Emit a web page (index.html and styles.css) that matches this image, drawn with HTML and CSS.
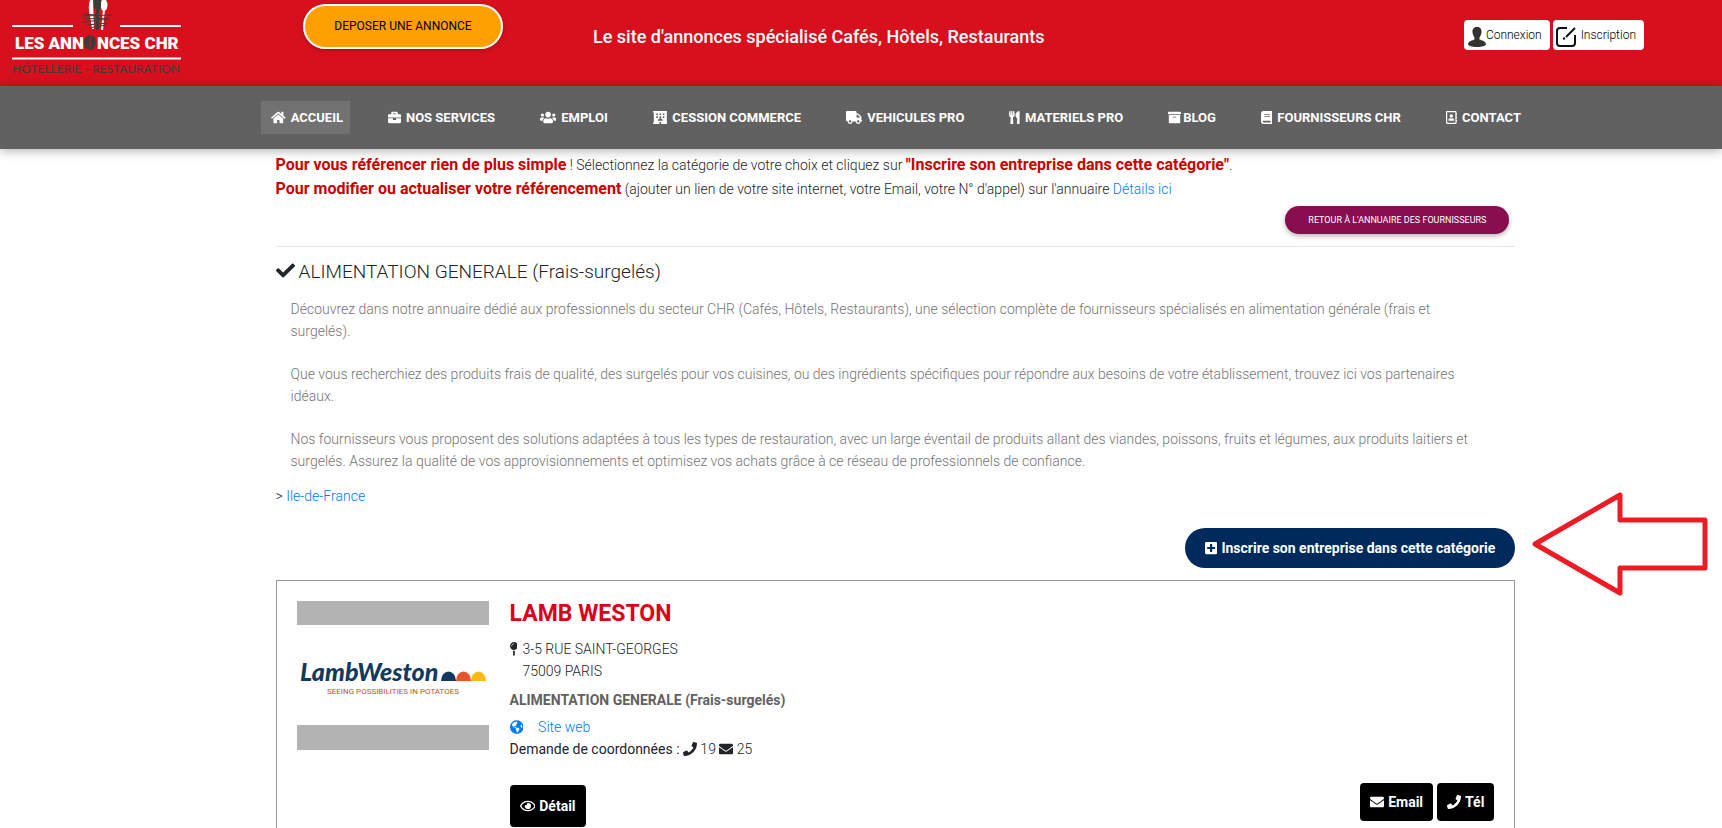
FILE: index.html
```html
<!DOCTYPE html>
<html lang="fr">
<head>
  <meta charset="UTF-8" />
  <meta name="viewport" content="width=device-width, initial-scale=1.0"/>
  <title>Les Annonces CHR - Annuaire des fournisseurs</title>
  <link rel="stylesheet" href="styles.css">
</head>
<body>
  <!-- Icon paths -->
  <svg class="sprite" aria-hidden="true">
    <defs>
      <path id="i-phone" d="M493.4 24.6l-104-24c-11.3-2.6-22.9 3.3-27.5 13.9l-48 112c-4.2 9.8-1.4 21.3 6.9 28l60.6 49.6c-36 76.7-98.9 140.5-177.2 177.2l-49.6-60.6c-6.8-8.3-18.2-11.1-28-6.9l-112 48C3.9 366.5-2 378.1.6 389.4l24 104C27.1 504.2 36.7 512 48 512c256.1 0 464-207.5 464-464 0-11.2-7.7-20.9-18.6-23.4z"/>
      <path id="i-mail" d="M502.3 190.8c3.9-3.1 9.7-.2 9.7 4.7V400c0 26.5-21.5 48-48 48H48c-26.5 0-48-21.5-48-48V195.6c0-5 5.7-7.8 9.7-4.7 22.4 17.4 52.1 39.5 154.1 113.6 21.1 15.4 56.7 47.8 92.2 47.6 35.7.3 72-32.8 92.3-47.6 102-74.1 131.6-96.3 154-113.7zM256 320c23.2.4 56.6-29.2 73.4-41.4 132.7-96.3 142.8-104.7 173.4-128.7 5.8-4.5 9.2-11.5 9.2-18.9v-19c0-26.5-21.5-48-48-48H48c-26.5 0-48 21.5-48 48v19c0 7.4 3.4 14.3 9.2 18.9 30.6 23.9 40.7 32.4 173.4 128.7 16.8 12.2 50.2 41.8 73.4 41.4z"/>
    </defs>
  </svg>

  <header class="topbar">
    <a class="logo" href="#" aria-label="Les Annonces CHR">
      <svg width="172" height="76" viewBox="0 0 172 76">
        <g stroke="#fff" stroke-width="2">
          <path d="M0 26h61M108 26h61M0 58.500h169"/>
        </g>
        <path d="M78 0c-2 6-1 12 0 16l2 13h2L81 0z" fill="#fff"/>
        <ellipse cx="92" cy="5" rx="3.500" ry="6" fill="#fff"/>
        <path d="M91 9h2l-2 21h-2z" fill="#fff"/>
        <path d="M82 0v6c0 2 1 3 2 4v20h3V10c1-1 2-2 2-4V0" fill="#3c3c3b"/>
        <path d="M70 16l30-1M72 19l24-1M71 22l26-3M75 25l20-2M77 28l17-3M72 14l12 1" stroke="#3c3c3b" stroke-width="1" fill="none"/>
        <text class="logo-name" x="72" y="49" text-anchor="end">LES ANN</text>
        <ellipse cx="78" cy="42.500" rx="6" ry="7.500" fill="#3c3c3b"/>
        <path d="M80 35c-5 5 1 8-4 15" stroke="#d8101e" stroke-width="1" fill="none"/>
        <text class="logo-name" x="85" y="49">NCES CHR</text>
        <text class="logo-sub" x="0" y="73">HÔTELLERIE - RESTAURATION</text>
      </svg>
    </a>
    <a class="post-ad" href="#">DEPOSER UNE ANNONCE</a>
    <p class="slogan">Le site d'annonces spécialisé Cafés, Hôtels, Restaurants</p>
    <div class="account">
      <a class="account-link" href="#">
        <svg width="18" height="20" viewBox="0 0 18 20" fill="#333"><path d="M9 0c3 0 5 2 4.500 5.500-.3 2.500-1.500 4-2 5v2c2 1 6 1.500 6.500 4.500 0 2-4 3-9 3s-9-1-9-3c.5-3 4.500-3.500 6.500-4.500v-2c-.5-1-1.700-2.500-2-5C4 2 6 0 9 0z"/></svg>
        Connexion
      </a>
      <a class="account-link signup" href="#">
        <svg width="20" height="20" viewBox="0 0 20 20" fill="none" stroke="#111" stroke-width="2"><path d="M11 1H4a3 3 0 0 0-3 3v12a3 3 0 0 0 3 3h12a3 3 0 0 0 3-3V8M19 1l-9 9M9 11l-2 1"/></svg>
        Inscription
      </a>
    </div>
  </header>

  <nav class="menu">
    <a class="active" href="#"><svg class="icon" viewBox="0 0 576 512"><path d="M280.37 148.26L96 300.11V464a16 16 0 0 0 16 16l112.06-.29a16 16 0 0 0 15.92-16V368a16 16 0 0 1 16-16h64a16 16 0 0 1 16 16v95.64a16 16 0 0 0 16 16.05L464 480a16 16 0 0 0 16-16V300L295.67 148.26a12.19 12.19 0 0 0-15.3 0zM571.6 251.47L488 182.56V44.05a12 12 0 0 0-12-12h-56a12 12 0 0 0-12 12v72.61L318.47 43a48 48 0 0 0-61 0L4.34 251.47a12 12 0 0 0-1.6 16.9l25.5 31A12 12 0 0 0 45.15 301l235.22-193.74a12.19 12.19 0 0 1 15.3 0L530.9 301a12 12 0 0 0 16.9-1.6l25.5-31a12 12 0 0 0-1.7-16.93z"/></svg>ACCUEIL</a>
    <a href="#"><svg class="icon" viewBox="0 0 512 512"><path d="M320 336c0 8.84-7.16 16-16 16h-96c-8.84 0-16-7.16-16-16v-48H0v144c0 25.6 22.4 48 48 48h416c25.6 0 48-22.4 48-48V288H320v48zm144-208h-80V80c0-25.6-22.4-48-48-48H176c-25.6 0-48 22.4-48 48v48H48c-25.6 0-48 22.4-48 48v80h512v-80c0-25.6-22.4-48-48-48zm-144 0H192V96h128v32z"/></svg>NOS SERVICES</a>
    <a href="#"><svg class="icon" viewBox="0 0 640 512"><path d="M96 224c35.3 0 64-28.7 64-64s-28.7-64-64-64-64 28.7-64 64 28.7 64 64 64zm448 0c35.3 0 64-28.7 64-64s-28.7-64-64-64-64 28.7-64 64 28.7 64 64 64zm32 32h-64c-17.6 0-33.5 7.1-45.1 18.6 40.3 22.1 68.9 62 75.1 109.4h66c17.7 0 32-14.3 32-32v-32c0-35.3-28.7-64-64-64zm-256 0c61.9 0 112-50.1 112-112S381.9 32 320 32 208 82.1 208 144s50.1 112 112 112zm76.8 32h-8.3c-20.8 10-43.9 16-68.5 16s-47.6-6-68.5-16h-8.3C179.6 288 128 339.6 128 403.2V432c0 26.5 21.5 48 48 48h288c26.5 0 48-21.5 48-48v-28.8c0-63.6-51.6-115.2-115.2-115.2zm-223.7-13.4C161.5 263.1 145.6 256 128 256H64c-35.3 0-64 28.7-64 64v32c0 17.7 14.3 32 32 32h65.9c6.3-47.4 34.9-87.3 75.2-109.4z"/></svg>EMPLOI</a>
    <a href="#"><svg class="icon" viewBox="0 0 576 512"><path fill-rule="evenodd" d="M16 0h544c9 0 16 7 16 16v32c0 9-7 16-16 16h-16v384h16c9 0 16 7 16 16v32c0 9-7 16-16 16H320v-80h-64v80H16c-9 0-16-7-16-16v-32c0-9 7-16 16-16h16V64H16C7 64 0 57 0 48V16C0 7 7 0 16 0zM128 96v64h64V96zM256 96v64h64V96zM384 96v64h64V96zM128 208v64h64v-64zM256 208v64h64v-64zM384 208v64h64v-64zM192 384h192c0-53-43-96-96-96s-96 43-96 96z"/></svg>CESSION COMMERCE</a>
    <a href="#"><svg class="icon" viewBox="0 0 640 512"><path d="M624 352h-16V243.900c0-12.700-5.100-24.900-14.100-33.900L494 110.100c-9-9-21.200-14.100-33.900-14.100H416V48c0-26.500-21.500-48-48-48H48C21.500 0 0 21.500 0 48v320c0 26.500 21.500 48 48 48h16c0 53 43 96 96 96s96-43 96-96h128c0 53 43 96 96 96s96-43 96-96h48c8.800 0 16-7.200 16-16v-32c0-8.800-7.200-16-16-16zM160 464c-26.500 0-48-21.500-48-48s21.500-48 48-48 48 21.500 48 48-21.500 48-48 48zm320 0c-26.500 0-48-21.500-48-48s21.500-48 48-48 48 21.500 48 48-21.500 48-48 48zm80-208H416V144h44.100l99.900 99.900V256z"/></svg>VEHICULES PRO</a>
    <a href="#"><svg class="icon" viewBox="0 0 416 512"><path d="M207.900 15.200c.8 4.700 16.100 94.500 16.100 128.800 0 52.300-27.800 89.600-68.900 104.600L168 486.700c.7 13.700-10.200 25.300-24 25.300H80c-13.700 0-24.700-11.500-24-25.300l12.900-238.100C27.700 233.600 0 196.200 0 144 0 109.600 15.300 19.900 16.100 15.200 19.300-5.100 61.400-5.400 64 16.300v141.200c1.300 3.400 15.100 3.200 16 0 1.400-25.300 7.900-139.200 8-141.800 3.300-20.800 44.700-20.800 47.900 0 .2 2.700 6.600 116.500 8 141.800.9 3.200 14.800 3.400 16 0V16.300c2.600-21.600 44.800-21.400 47.900-1.100zm119.200 285.700l-15 185.100c-1.200 14 9.900 26 23.900 26h56c13.300 0 24-10.700 24-24V24c0-13.200-10.700-24-24-24-82.500 0-221.400 178.500-64.900 300.900z"/></svg>MATERIELS PRO</a>
    <a class="tight" href="#"><svg class="icon" viewBox="0 0 512 512"><path d="M32 448c0 17.700 14.300 32 32 32h384c17.700 0 32-14.300 32-32V160H32v288zm160-212c0-6.600 5.400-12 12-12h104c6.600 0 12 5.400 12 12v8c0 6.600-5.400 12-12 12H204c-6.600 0-12-5.400-12-12v-8zM480 32H32C14.300 32 0 46.300 0 64v48c0 8.800 7.200 16 16 16h480c8.800 0 16-7.200 16-16V64c0-17.700-14.300-32-32-32z"/></svg>BLOG</a>
    <a href="#"><svg class="icon" viewBox="0 0 448 512"><path d="M448 360V24c0-13.300-10.700-24-24-24H96C43 0 0 43 0 96v320c0 53 43 96 96 96h328c13.300 0 24-10.700 24-24v-16c0-7.500-3.500-14.300-8.900-18.700-4.200-15.400-4.200-59.300 0-74.700 5.400-4.300 8.900-11.100 8.900-18.600zM128 134c0-3.300 2.700-6 6-6h212c3.300 0 6 2.700 6 6v20c0 3.300-2.700 6-6 6H134c-3.300 0-6-2.700-6-6v-20zm0 64c0-3.300 2.700-6 6-6h212c3.300 0 6 2.700 6 6v20c0 3.300-2.700 6-6 6H134c-3.300 0-6-2.700-6-6v-20zm253.400 250H96c-17.700 0-32-14.300-32-32 0-17.600 14.400-32 32-32h285.400c-1.900 17.100-1.900 46.900 0 64z"/></svg>FOURNISSEURS CHR</a>
    <a href="#"><svg class="icon" viewBox="0 0 448 512"><path d="M436 160c6.600 0 12-5.400 12-12v-40c0-6.600-5.400-12-12-12h-20V48c0-26.500-21.500-48-48-48H48C21.500 0 0 21.500 0 48v416c0 26.500 21.500 48 48 48h320c26.500 0 48-21.500 48-48v-48h20c6.600 0 12-5.400 12-12v-40c0-6.600-5.400-12-12-12h-20v-64h20c6.600 0 12-5.400 12-12v-40c0-6.600-5.400-12-12-12h-20v-64h20zm-68 304H48V48h320v416zM208 256c35.300 0 64-28.700 64-64s-28.700-64-64-64-64 28.700-64 64 28.700 64 64 64zm-89.600 128h179.200c12.400 0 22.400-8.600 22.400-19.200v-19.200c0-31.800-30.100-57.600-67.200-57.600-10.800 0-18.700 8-44.800 8-26.900 0-33.400-8-44.800-8-37.100 0-67.200 25.800-67.200 57.600v19.200c0 10.600 10 19.200 22.400 19.200z"/></svg>CONTACT</a>
  </nav>

  <main>
    <p class="notice"><strong>Pour vous référencer rien de plus simple</strong> ! Sélectionnez la catégorie de votre choix et cliquez sur <strong>"Inscrire son entreprise dans cette catégorie"</strong>.<br>
    <strong>Pour modifier ou actualiser votre référencement</strong> (ajouter un lien de votre site internet, votre Email, votre N° d'appel) sur l'annuaire <a href="#">Détails ici</a></p>

    <div class="back-row">
      <a class="back-btn" href="#">RETOUR À L'ANNUAIRE DES FOURNISSEURS</a>
    </div>

    <h1><svg class="icon" viewBox="0 0 512 512"><path d="M173.898 439.404l-166.400-166.400c-9.997-9.997-9.997-26.206 0-36.204l36.203-36.204c9.997-9.998 26.207-9.998 36.204 0L192 312.690 432.095 72.596c9.997-9.997 26.207-9.997 36.204 0l36.203 36.204c9.997 9.997 9.997 26.206 0 36.204l-294.400 294.401c-9.998 9.997-26.207 9.997-36.204-.001z"/></svg>ALIMENTATION GENERALE (Frais-surgelés)</h1>

    <div class="intro">
      <p>Découvrez dans notre annuaire dédié aux professionnels du secteur CHR (Cafés, Hôtels, Restaurants), une sélection complète de fournisseurs spécialisés en alimentation générale (frais et surgelés).</p>
      <p>Que vous recherchiez des produits frais de qualité, des surgelés pour vos cuisines, ou des ingrédients spécifiques pour répondre aux besoins de votre établissement, trouvez ici vos partenaires idéaux.</p>
      <p>Nos fournisseurs vous proposent des solutions adaptées à tous les types de restauration, avec un large éventail de produits allant des viandes, poissons, fruits et légumes, aux produits laitiers et surgelés. Assurez la qualité de vos approvisionnements et optimisez vos achats grâce à ce réseau de professionnels de confiance.</p>
    </div>

    <p class="region">&gt; <a href="#">Ile-de-France</a></p>

    <div class="register-row">
      <a class="register-btn" href="#"><svg class="icon" viewBox="0 0 448 512"><path d="M400 32H48C21.500 32 0 53.500 0 80v352c0 26.500 21.500 48 48 48h352c26.500 0 48-21.500 48-48V80c0-26.500-21.500-48-48-48zm-32 252c0 6.600-5.400 12-12 12h-92v92c0 6.600-5.400 12-12 12h-56c-6.600 0-12-5.400-12-12v-92H92c-6.600 0-12-5.400-12-12v-56c0-6.600 5.400-12 12-12h92v-92c0-6.600 5.400-12 12-12h56c6.600 0 12 5.400 12 12v92h92c6.600 0 12 5.400 12 12v56z"/></svg>Inscrire son entreprise dans cette catégorie</a>
      <svg class="arrow" width="176" height="104" viewBox="0 0 176 104"><path d="M3 52L88 3v25h85v48H88v25z" fill="none" stroke="#ed1c24" stroke-width="5" stroke-linejoin="round"/></svg>
    </div>

    <!-- Supplier card -->
    <article class="supplier">
      <div class="picture">
        <svg width="192" height="149" viewBox="0 0 192 149" role="img" aria-label="Lamb Weston">
          <path d="M0 0h192v24H0zM0 124h192v25H0z" fill="#b3b3b3"/>
          <text class="brand" x="3" y="80">LambWeston</text>
          <path d="M144 80a7.500 9.500 0 0 1 15 0z" fill="#133a5e"/>
          <path d="M159 80a7.500 9.500 0 0 1 15 0z" fill="#e8542a"/>
          <path d="M174 80a7.500 9.500 0 0 1 15 0z" fill="#fdb913"/>
          <text class="tagline" x="96" y="93" text-anchor="middle">SEEING POSSIBILITIES IN POTATOES</text>
        </svg>
      </div>
      <div class="details">
        <h2>LAMB WESTON</h2>
        <div class="address">
          <svg class="icon" viewBox="0 0 288 512"><path d="M112 316.940v156.690l22.020 33.020c4.750 7.120 15.220 7.120 19.970 0L176 473.630V316.940c-10.390 1.920-21.060 3.060-32 3.060s-21.610-1.140-32-3.060zM144 0C64.470 0 0 64.470 0 144s64.470 144 144 144 144-64.470 144-144S223.530 0 144 0zm0 76c-37.500 0-68 30.500-68 68 0 6.620-5.380 12-12 12s-12-5.380-12-12c0-50.730 41.280-92 92-92 6.620 0 12 5.380 12 12s-5.380 12-12 12z"/></svg>
          <p>3-5 RUE SAINT-GEORGES<br>75009 PARIS</p>
        </div>
        <p class="category">ALIMENTATION GENERALE (Frais-surgelés)</p>
        <a class="website" href="#"><svg class="icon" viewBox="0 0 496 512"><path d="M248 8C111.030 8 0 119.030 0 256s111.030 248 248 248 248-111.030 248-248S384.970 8 248 8zm82.290 357.600c-3.900 3.880-7.990 7.950-11.310 11.280-2.990 3-5.100 6.700-6.170 10.710-1.510 5.660-2.730 11.380-4.770 16.870l-17.390 46.850c-13.760 3-28 4.690-42.650 4.690v-27.380c1.690-12.620-7.640-36.260-22.630-51.250-6-6-9.370-14.140-9.370-22.630v-32.010c0-11.640-6.270-22.340-16.460-27.970-14.370-7.950-34.810-19.060-48.810-26.110-11.480-5.780-22.100-13.140-31.650-21.750l-.8-.72a114.792 114.792 0 0 1-18.060-20.740c-9.380-13.770-24.660-36.420-34.590-51.140 20.470-45.500 57.360-82.040 103.200-101.890l24.010 12.010C203.480 89.740 216 82.010 216 70.110v-11.300c7.990-1.290 16.120-2.110 24.390-2.420l28.300 28.300c6.250 6.250 6.250 16.380 0 22.630L264 112l-10.340 10.340c-3.120 3.120-3.120 8.190 0 11.310l4.690 4.690c3.120 3.120 3.120 8.190 0 11.310l-8 8a8.008 8.008 0 0 1-5.660 2.340h-8.990c-2.080 0-4.080.81-5.580 2.270l-9.920 9.650a8.008 8.008 0 0 0-1.580 9.310l15.590 31.190c2.660 5.320-1.210 11.580-7.150 11.580h-5.640c-1.930 0-3.790-.7-5.240-1.960l-9.280-8.060a16.017 16.017 0 0 0-15.550-3.100l-31.170 10.390a11.950 11.950 0 0 0-8.170 11.340c0 4.530 2.560 8.660 6.610 10.690l11.080 5.540c9.410 4.710 19.790 7.160 30.310 7.160s22.590 27.290 32 32h66.750c8.490 0 16.620 3.370 22.630 9.370l13.690 13.690a30.503 30.503 0 0 1 8.930 21.570 46.536 46.536 0 0 1-13.720 32.980zM417 274.250c-5.790-1.450-10.840-5-14.150-9.970l-17.980-26.970a23.970 23.970 0 0 1 0-26.620l19.590-29.380c2.320-3.470 5.500-6.290 9.240-8.150l12.980-6.490C440.200 193.590 448 223.870 448 256c0 8.670-.74 17.160-1.820 25.540L417 274.250z"/></svg>Site web</a>
        <p class="requests"><span>Demande de coordonnées :</span> <svg class="icon" viewBox="0 0 512 512"><use href="#i-phone"/></svg> 19 <svg class="icon" viewBox="0 0 512 512"><use href="#i-mail"/></svg> 25</p>
        <div class="actions">
          <button class="btn detail" type="button"><svg class="icon" viewBox="0 0 576 512"><path d="M288 144a110.940 110.940 0 0 0-31.240 5 55.400 55.400 0 0 1 7.240 27 56 56 0 0 1-56 56 55.400 55.400 0 0 1-27-7.240A111.710 111.710 0 1 0 288 144zm284.520 97.400C518.290 135.590 410.930 64 288 64S57.680 135.640 3.480 241.410a32.350 32.350 0 0 0 0 29.190C57.710 376.410 165.070 448 288 448s230.320-71.640 284.520-177.410a32.350 32.350 0 0 0 0-29.190zM288 400c-98.650 0-189.090-55-237.930-144C98.910 167 189.340 112 288 112s189.090 55 237.930 144C477.100 345 386.660 400 288 400z"/></svg>Détail</button>
          <div class="contact">
            <button class="btn" type="button"><svg class="icon" viewBox="0 0 512 512"><use href="#i-mail"/></svg>Email</button>
            <button class="btn" type="button"><svg class="icon" viewBox="0 0 512 512"><use href="#i-phone"/></svg>Tél</button>
          </div>
        </div>
      </div>
    </article>
  </main>
</body>
</html>
```

FILE: styles.css
```css
* {
  box-sizing: border-box;
}

body {
  margin: 0;
  font-family: Roboto, "Liberation Sans", sans-serif;
  font-size: 14px;
  font-weight: 300;
  line-height: 22px;
  color: #212529;
  background: #fff;
}

p, h1, h2 {
  margin: 0;
}

a {
  color: #007bff;
  text-decoration: none;
}

.sprite {
  display: none;
}

.icon {
  height: 1em;
  fill: currentColor;
  vertical-align: -2px;
}

/* Header */
.topbar {
  display: flex;
  align-items: flex-start;
  height: 86px;
  padding: 0 78px 0 12px;
  background: #d8101e;
}

.logo svg {
  display: block;
  overflow: visible;
}

.logo-name {
  font-size: 17px;
  font-weight: 900;
  fill: #fff;
}

.logo-sub {
  font-family: Lato, sans-serif;
  font-size: 12px;
  font-weight: 400;
  fill: #3c3c3b;
}

.post-ad {
  width: 200px;
  margin: 4px 0 0 119px;
  padding: 10px 0 11px;
  border: 2px solid #fff;
  border-radius: 24px;
  background: #ffa000;
  color: #000;
  font-size: 12px;
  font-weight: 400;
  line-height: 20px;
  text-align: center;
  box-shadow: 0 2px 5px rgba(0, 0, 0, 0.2);
}

.slogan {
  margin: 25px 0 0 90px;
  color: #fff;
  font-size: 18px;
  font-weight: 500;
  line-height: 24px;
}

.account {
  display: flex;
  gap: 3px;
  margin: 20px 0 0 auto;
}

.account-link {
  display: flex;
  height: 30px;
  padding: 0 8px 0 4px;
  border-radius: 4px;
  background: #fff;
  color: #000;
  font-size: 12px;
  line-height: 30px;
}

.account-link svg {
  margin-top: 7px;
}

.signup {
  gap: 5px;
  padding-left: 3px;
}

/* Main menu */
.menu {
  display: flex;
  align-items: center;
  gap: 28px;
  height: 63px;
  padding-left: 261px;
  background: #616161;
  box-shadow: 0 2px 10px rgba(0, 0, 0, 0.3);
}

.menu a {
  display: flex;
  align-items: center;
  gap: 5px;
  padding: 0 7px 0 10px;
  color: #fff;
  font-size: 13px;
  font-weight: 700;
  line-height: 33px;
  white-space: nowrap;
}

.menu a.active {
  background: #727272;
}

.menu a.tight {
  gap: 2px;
}

/* Content */
main {
  margin: 0 12% 0 16%;
  padding-top: 4px;
}

.notice {
  font-size: 14px;
  line-height: 24px;
}

.notice strong {
  color: #c00;
  font-size: 16px;
  font-weight: 700;
}

.back-row {
  display: flex;
  justify-content: flex-end;
  padding: 5px 6px 12px;
  border-bottom: 1px solid #e5e5e5;
}

.back-btn {
  padding: 0 23px;
  border-radius: 14px;
  background: #880e4f;
  color: #fff;
  font-size: 9px;
  font-weight: 400;
  line-height: 28px;
  box-shadow: 0 2px 5px rgba(0, 0, 0, 0.3);
}

h1 {
  margin-top: 12px;
  font-size: 19px;
  font-weight: 300;
  line-height: 26px;
}

h1 .icon {
  margin-right: 4px;
}

.intro {
  padding: 13px 36px 0 15px;
  color: #757575;
}

.intro p {
  margin-bottom: 21px;
}

.region {
  margin-top: -8px;
}

.register-row {
  position: relative;
  display: flex;
  justify-content: flex-end;
  margin-top: 21px;
}

.register-btn {
  padding: 0 20px;
  border-radius: 20px;
  background: #002a5c;
  color: #fff;
  font-weight: 700;
  line-height: 40px;
}

.register-btn .icon {
  margin-right: 4px;
}

.arrow {
  position: absolute;
  top: -36px;
  left: 100%;
  margin-left: 17px;
}

/* Supplier card */
.supplier {
  display: flex;
  gap: 21px;
  margin-top: 12px;
  padding: 20px 20px 24px;
  border: 1px solid #999;
}

.picture svg {
  display: block;
}

.brand {
  font-family: Lato, sans-serif;
  font-size: 25px;
  font-style: italic;
  font-weight: 900;
  fill: #133a5e;
}

.tagline {
  font-size: 8px;
  font-weight: 400;
  fill: #c9502c;
}

.details {
  flex: 1;
}

h2 {
  color: #dc0019;
  font-size: 23px;
  font-weight: 700;
  line-height: 26px;
}

.address {
  display: flex;
  align-items: flex-start;
  gap: 5px;
  margin-top: 11px;
}

.address .icon {
  margin-top: 4px;
}

.category {
  margin-top: 7px;
  color: #616161;
  font-weight: 700;
}

.website {
  display: flex;
  align-items: center;
  gap: 15px;
  margin-top: 5px;
}

.requests span {
  font-weight: 400;
}

.actions {
  display: flex;
  align-items: flex-start;
  justify-content: space-between;
  margin-top: 23px;
}

.contact {
  display: flex;
  gap: 4px;
}

.btn {
  padding: 0 10px;
  border: none;
  border-radius: 4px;
  background: #000;
  color: #fff;
  font-family: inherit;
  font-size: 14px;
  font-weight: 700;
  line-height: 38px;
  cursor: pointer;
}

.btn .icon {
  margin-right: 4px;
}

.btn.detail {
  margin-top: 2px;
  line-height: 42px;
}
```
